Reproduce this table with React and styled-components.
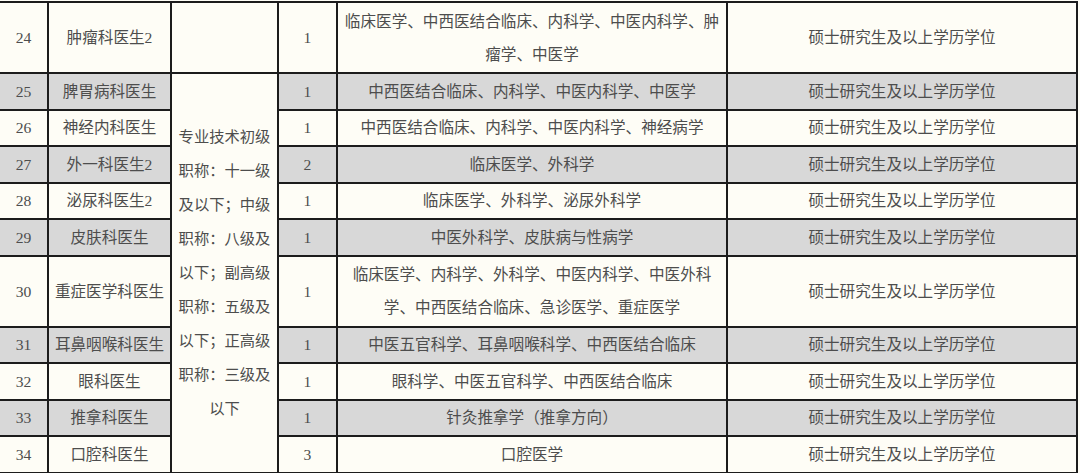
import React from 'react';
import styled, { createGlobalStyle } from 'styled-components';

const GlobalStyle = createGlobalStyle`
  html, body {
    margin: 0;
    padding: 0;
    background: #fefdf6;
  }
  body {
    font-family: "Liberation Serif", "Noto Sans CJK SC", serif;
  }
`;

const Page = styled.div`
  padding-top: 1px;
  width: 1080px;
  height: 473px;
  overflow: hidden;
`;

const Grid = styled.div`
  display: grid;
  grid-template-columns: 47px 121px 105px 57px 388px 348px;
  grid-template-rows: 69px repeat(5, 34.5px) 69px repeat(4, 34.5px);
  gap: 2px;
  width: fit-content;
  background: #1c1c1c;
  border: 2px solid #1c1c1c;
  border-left: none;
`;

const Cell = styled.div`
  display: flex;
  align-items: center;
  justify-content: center;
  text-align: center;
  background: ${(p) => (p.$shade ? '#d8d8d8' : '#fefdf6')};
  color: #4d4d4d;
  font-size: 15.6px;
  line-height: 33px;
  white-space: nowrap;
`;

const MergedCell = styled(Cell)`
  grid-column: 3;
  grid-row: 2 / span 10;
  flex-direction: column;
  line-height: 34px;
  font-size: 15.3px;
`;

const Lines = styled.div`
  display: flex;
  flex-direction: column;
  align-items: center;
`;

const rows = [
  { no: 24, name: '肿瘤科医生2', count: 1, major: ['临床医学、中西医结合临床、内科学、中医内科学、肿', '瘤学、中医学'] },
  { no: 25, name: '脾胃病科医生', count: 1, major: ['中西医结合临床、内科学、中医内科学、中医学'] },
  { no: 26, name: '神经内科医生', count: 1, major: ['中西医结合临床、内科学、中医内科学、神经病学'] },
  { no: 27, name: '外一科医生2', count: 2, major: ['临床医学、外科学'] },
  { no: 28, name: '泌尿科医生2', count: 1, major: ['临床医学、外科学、泌尿外科学'] },
  { no: 29, name: '皮肤科医生', count: 1, major: ['中医外科学、皮肤病与性病学'] },
  { no: 30, name: '重症医学科医生', count: 1, major: ['临床医学、内科学、外科学、中医内科学、中医外科', '学、中西医结合临床、急诊医学、重症医学'] },
  { no: 31, name: '耳鼻咽喉科医生', count: 1, major: ['中医五官科学、耳鼻咽喉科学、中西医结合临床'] },
  { no: 32, name: '眼科医生', count: 1, major: ['眼科学、中医五官科学、中西医结合临床'] },
  { no: 33, name: '推拿科医生', count: 1, major: ['针灸推拿学（推拿方向）'] },
  { no: 34, name: '口腔科医生', count: 3, major: ['口腔医学'] },
];

const titleLines = [
  '专业技术初级',
  '职称：十一级',
  '及以下；中级',
  '职称：八级及',
  '以下；副高级',
  '职称：五级及',
  '以下；正高级',
  '职称：三级及',
  '以下',
];

const degree = '硕士研究生及以上学历学位';

const App = () => {
  return (
    <Page>
      <GlobalStyle />
      <Grid>
        {rows.map((row, i) => {
          const shade = i % 2 === 1;
          return (
            <React.Fragment key={row.no}>
              <Cell $shade={shade}>{row.no}</Cell>
              <Cell $shade={shade}>{row.name}</Cell>
              {i === 0 && <Cell />}
              <Cell $shade={shade}>{row.count}</Cell>
              <Cell $shade={shade}>
                <Lines>
                  {row.major.map((line) => (
                    <span key={line}>{line}</span>
                  ))}
                </Lines>
              </Cell>
              <Cell $shade={shade}>{degree}</Cell>
            </React.Fragment>
          );
        })}
        <MergedCell>
          {titleLines.map((line) => (
            <span key={line}>{line}</span>
          ))}
        </MergedCell>
      </Grid>
    </Page>
  );
};

export default App;
